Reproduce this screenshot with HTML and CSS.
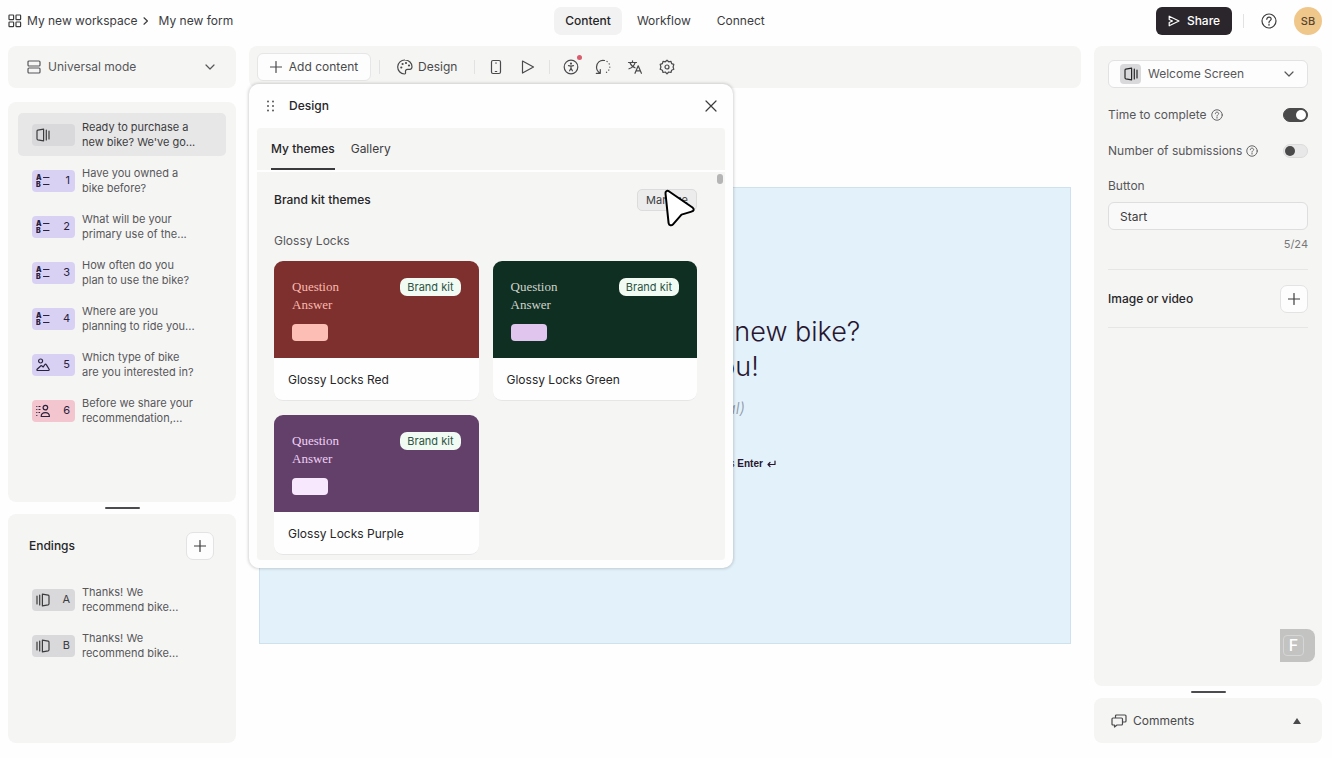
FILE: index.html
```html
<!DOCTYPE html>
<html lang="en">
<head>
    <meta charset="UTF-8">
    <meta name="viewport" content="width=device-width, initial-scale=1.0">
    <title>My new form</title>
    <link rel="stylesheet" href="styles.css">
</head>
<body>
    <!-- shared icons -->
    <svg class="sprite" width="0" height="0" aria-hidden="true">
        <symbol id="chevron" viewBox="0 0 10 10"><path d="M1 3l4 4 4-4"/></symbol>
        <symbol id="plus" viewBox="0 0 12 12"><path d="M6 .5v11M.5 6h11"/></symbol>
        <symbol id="help" viewBox="0 0 16 16"><circle cx="8" cy="8" r="7"/><path d="M5.8 6.3c0-1.4 1-2.1 2.2-2.1s2.2.8 2.2 1.9c0 1.5-2.2 1.6-2.2 3.3M8 11v1.2"/></symbol>
        <symbol id="welcome" viewBox="0 0 14 14"><path d="M1 3.2Q1 2.4 1.8 2.2L7.6 1.2v11.6L1.8 11.8Q1 11.6 1 10.8zM10.3 2v10M13 3v8"/></symbol>
        <symbol id="ending" viewBox="0 0 14 14"><path d="M1 3v8M3.7 2v10M6.4 1.2l5.8 1q.8.2.8 1v7.6q0 .8-.8 1l-5.8 1z"/></symbol>
        <symbol id="choice" viewBox="0 0 14 14"><text x="0" y="6">A</text><text x="0" y="13">B</text><path d="M7.500 3.500h5.500M7.500 10.500h5.500"/></symbol>
        <symbol id="picture" viewBox="0 0 14 14"><circle cx="4.6" cy="3" r="2"/><path d="M1.8 12.5h10.6c.8 0 1-.7.7-1.3L10.3 6.6c-.4-.7-1.1-.7-1.5 0L7.2 9 6 8c-.6-.4-1.2-.3-1.6.2L1.1 11.3c-.5.6-.1 1.2.7 1.2z"/></symbol>
        <symbol id="contact" viewBox="0 0 14 14"><circle cx="9.4" cy="3.6" r="2.3"/><path d="M5.2 12.5c0-2.400 1.800-3.900 4.200-3.900s4 1.500 4 3.900zM.7 2.500h.2M.7 5.500h.2M.7 8.500h.2M.7 11.500h.2M3 2.500h1M3 5.500h1M3 8.500h.6"/></symbol>
    </svg>

    <header class="topbar">
        <nav class="breadcrumb">
            <svg class="icon" width="14" height="14" viewBox="0 0 14 14"><rect x="1" y="1" width="4.6" height="4.6" rx=".6"/><rect x="8" y="1" width="4.6" height="4.6" rx=".6"/><rect x="1" y="8" width="4.6" height="4.6" rx=".6"/><rect x="8" y="8" width="4.6" height="4.6" rx=".6"/></svg>
            <a href="#">My new workspace</a>
            <svg class="icon crumb-arrow" width="6" height="8" viewBox="0 0 6 8"><path d="M1 .8L4.4 4 1 7.2"/></svg>
            <a href="#">My new form</a>
        </nav>
        <nav class="tabs">
            <a href="#" class="active">Content</a>
            <a href="#">Workflow</a>
            <a href="#">Connect</a>
        </nav>
        <div class="account">
            <button class="share">
                <svg class="icon" width="12" height="12" viewBox="0 0 12 12"><path d="M1.2 1.2L11 6 1.2 10.8V7.5L4.5 6 1.2 4.5z"/></svg>
                Share
            </button>
            <span class="divider"></span>
            <button class="plain" aria-label="Help"><svg class="icon" width="16" height="16"><use href="#help"/></svg></button>
            <button class="avatar">SB</button>
        </div>
    </header>

    <div class="layout">
        <aside class="column">
            <label class="panel mode">
                <svg class="icon" width="14" height="14" viewBox="0 0 14 14"><rect x="1" y="1" width="12" height="5" rx="1"/><rect x="1" y="8" width="12" height="5" rx="1"/></svg>
                <select aria-label="Mode"><option>Universal mode</option></select>
                <svg class="icon" width="10" height="10"><use href="#chevron"/></svg>
            </label>

            <section class="panel questions">
                <a href="#" class="item selected">
                    <span class="tag gray"><svg class="icon" width="14" height="14"><use href="#welcome"/></svg></span>
                    <span>Ready to purchase a<br>new bike? We've go...</span>
                </a>
                <a href="#" class="item">
                    <span class="tag"><svg class="icon" width="14" height="14"><use href="#choice"/></svg>1</span>
                    <span>Have you owned a<br>bike before?</span>
                </a>
                <a href="#" class="item">
                    <span class="tag"><svg class="icon" width="14" height="14"><use href="#choice"/></svg>2</span>
                    <span>What will be your<br>primary use of the...</span>
                </a>
                <a href="#" class="item">
                    <span class="tag"><svg class="icon" width="14" height="14"><use href="#choice"/></svg>3</span>
                    <span>How often do you<br>plan to use the bike?</span>
                </a>
                <a href="#" class="item">
                    <span class="tag"><svg class="icon" width="14" height="14"><use href="#choice"/></svg>4</span>
                    <span>Where are you<br>planning to ride you...</span>
                </a>
                <a href="#" class="item">
                    <span class="tag"><svg class="icon" width="14" height="14"><use href="#picture"/></svg>5</span>
                    <span>Which type of bike<br>are you interested in?</span>
                </a>
                <a href="#" class="item">
                    <span class="tag pink"><svg class="icon" width="14" height="14"><use href="#contact"/></svg>6</span>
                    <span>Before we share your<br>recommendation,...</span>
                </a>
            </section>

            <div class="handle"></div>

            <section class="panel endings">
                <div class="row endings-head">
                    <h2>Endings</h2>
                    <button class="add" aria-label="Add ending"><svg class="icon" width="12" height="12"><use href="#plus"/></svg></button>
                </div>
                <a href="#" class="item">
                    <span class="tag gray"><svg class="icon" width="14" height="14"><use href="#ending"/></svg>A</span>
                    <span>Thanks! We<br>recommend bike...</span>
                </a>
                <a href="#" class="item">
                    <span class="tag gray"><svg class="icon" width="14" height="14"><use href="#ending"/></svg>B</span>
                    <span>Thanks! We<br>recommend bike...</span>
                </a>
            </section>
        </aside>

        <main class="editor">
            <div class="panel toolbar">
                <button class="add-content"><svg class="icon" width="12" height="12"><use href="#plus"/></svg>Add content</button>
                <span class="divider"></span>
                <button class="plain design">
                    <svg class="icon" width="16" height="16" viewBox="0 0 16 16"><path d="M8 1a7 7 0 0 0-.6 14c1.3 0 1.2-1 1.1-1.9C8.3 11.4 9 10.3 10.5 10.3h2.3c1.4 0 2.2-1 2.2-2.500C15 4 12 1 8 1z"/><circle cx="4.3" cy="8.5" r=".5"/><circle cx="5.6" cy="5" r=".5"/><circle cx="9" cy="4" r=".5"/><circle cx="12" cy="6.5" r=".5"/></svg>
                    Design
                </button>
                <span class="divider"></span>
                <div class="tools">
                    <button class="plain" aria-label="Device"><svg class="icon" width="16" height="16" viewBox="0 0 16 16"><rect x="3.5" y="1.5" width="9" height="13" rx="1.5"/><path d="M7.6 4h.8M7.3 12.5h1.4"/></svg></button>
                    <button class="plain" aria-label="Preview"><svg class="icon" width="16" height="16" viewBox="0 0 16 16"><path d="M2.500 2l11 6-11 6z"/></svg></button>
                </div>
                <span class="divider"></span>
                <div class="tools">
                    <button class="plain notify" aria-label="Accessibility"><svg class="icon" width="16" height="16" viewBox="0 0 16 16"><circle cx="8" cy="8" r="6.8"/><circle cx="8" cy="4.6" r=".5"/><path d="M5.500 6.600l2.500.5 2.500-.5M8 7v2.200M8 9.200l-1.400 2.600M8 9.200l1.400 2.600"/></svg></button>
                    <button class="plain" aria-label="Logic"><svg class="icon" width="16" height="16" viewBox="0 0 16 16"><path d="M9.500 1.500C5 .5 1.500 4 1.500 8c0 2.800 1.400 4.800 3.500 6M5.300 10.500v3.800H1.300"/><path stroke-dasharray=".2 3" d="M12 2.500c4.500 3 3.800 9.800-3 12"/></svg></button>
                    <button class="plain" aria-label="Translate"><svg class="icon" width="16" height="16" viewBox="0 0 16 16"><path d="M1.500 3.500h8M5.500 1.800v1.700M3 3.800c.8 2.300 2.800 4.200 5 5M8 3.800C7.200 6.500 5 8.700 2 9.800M8 14.300l3.200-7.500 3.200 7.500M9.200 11.800h4"/></svg></button>
                    <button class="plain" aria-label="Settings"><svg class="icon" width="16" height="16" viewBox="0 0 16 16"><circle cx="8" cy="8" r="2"/><path d="M8 1.200l1.700 1.600 2.300-.5.600 2.300 2.200.8L14.100 8l.7 2.300-2.200.9-.6 2.300-2.300-.5L8 14.800 6.300 13l-2.300.5-.6-2.300-2.200-.9L1.900 8l-.7-2.600 2.200-.8L4 2.300l2.300.5z"/></svg></button>
                </div>
            </div>

            <div class="canvas">
                <h1>Ready to purchase a new bike?<br>We've got you!</h1>
                <p class="description">Description (optional)</p>
                <div class="start">
                    <button>Start</button>
                    <span>press <b>Enter</b></span>
                    <svg class="icon" width="9" height="8" viewBox="0 0 9 8"><path d="M8 1v3.500H1M3 2.500l-2 2 2 2"/></svg>
                </div>
            </div>

            <!-- floating design window -->
            <div class="dialog">
                <div class="dialog-head">
                    <svg class="grip" width="8" height="12" viewBox="0 0 8 12"><circle cx="1" cy="1.500" r="1"/><circle cx="6" cy="1.500" r="1"/><circle cx="1" cy="6" r="1"/><circle cx="6" cy="6" r="1"/><circle cx="1" cy="10.500" r="1"/><circle cx="6" cy="10.500" r="1"/></svg>
                    <h2>Design</h2>
                    <button class="plain" aria-label="Close"><svg class="icon" width="12" height="12" viewBox="0 0 12 12"><path d="M1 1l10 10M11 1L1 11"/></svg></button>
                </div>
                <div class="dialog-body">
                    <nav class="dialog-tabs">
                        <a href="#" class="active">My themes</a>
                        <a href="#">Gallery</a>
                    </nav>
                    <div class="scroll">
                        <div class="row">
                            <h2>Brand kit themes</h2>
                            <div class="manage">
                                <button>Manage</button>
                                <svg class="cursor" width="34" height="40" viewBox="0 0 34 40"><path d="M2.500 4.500C2.200 2.500 4 1.200 5.800 2.200L29.500 18.500c2 1.600 1.400 3.600-1 4.100l-10 3-8.500 9.700c-1.600 1.800-4 1.200-4.400-1.200z"/></svg>
                            </div>
                        </div>
                        <h3>Glossy Locks</h3>
                        <div class="themes">
                            <button class="theme red">
                                <span class="preview">
                                    <span class="sample">Question<br>Answer<i></i></span>
                                    <span class="badge">Brand kit</span>
                                </span>
                                <span class="name">Glossy Locks Red</span>
                            </button>
                            <button class="theme green">
                                <span class="preview">
                                    <span class="sample">Question<br>Answer<i></i></span>
                                    <span class="badge">Brand kit</span>
                                </span>
                                <span class="name">Glossy Locks Green</span>
                            </button>
                            <button class="theme purple">
                                <span class="preview">
                                    <span class="sample">Question<br>Answer<i></i></span>
                                    <span class="badge">Brand kit</span>
                                </span>
                                <span class="name">Glossy Locks Purple</span>
                            </button>
                        </div>
                        <span class="thumb"></span>
                    </div>
                </div>
            </div>
        </main>

        <aside class="column">
            <section class="panel settings">
                <label class="block-type">
                    <span class="type-icon"><svg class="icon" width="14" height="14"><use href="#welcome"/></svg></span>
                    <select aria-label="Block type"><option>Welcome Screen</option></select>
                    <svg class="icon" width="10" height="10"><use href="#chevron"/></svg>
                </label>
                <div class="row option">
                    <label for="timeToggle">Time to complete <svg class="icon" width="12" height="12"><use href="#help"/></svg></label>
                    <input type="checkbox" id="timeToggle" class="toggle" checked>
                </div>
                <div class="row option">
                    <label for="countToggle">Number of submissions <svg class="icon" width="12" height="12"><use href="#help"/></svg></label>
                    <input type="checkbox" id="countToggle" class="toggle">
                </div>
                <label for="buttonText" class="field-label">Button</label>
                <input type="text" id="buttonText" class="input-field" value="Start">
                <span class="counter">5/24</span>
                <div class="row media">
                    <h2>Image or video</h2>
                    <button class="add" aria-label="Add image or video"><svg class="icon" width="12" height="12"><use href="#plus"/></svg></button>
                </div>
                <span class="key-badge"><kbd>F</kbd></span>
            </section>

            <div class="handle"></div>

            <button class="panel comments">
                <svg class="icon" width="16" height="14" viewBox="0 0 16 14"><path d="M4.500 4V2q0-1 1-1H14q1 0 1 1v5q0 1-1 1h-2.500M2 4h8.500q1 0 1 1v5q0 1-1 1H6l-2.500 2V11H2q-1 0-1-1V5q0-1 1-1z"/></svg>
                Comments
                <svg class="caret" width="8" height="6" viewBox="0 0 8 6"><path d="M4 0l4 6H0z"/></svg>
            </button>
        </aside>
    </div>
</body>
</html>
```
FILE: styles.css
```css
* {
    box-sizing: border-box;
}
body {
    font-family: Inter, "Liberation Sans", sans-serif;
    font-size: 12px;
    line-height: 16px;
    color: #3c3c3e;
    background: #fefefe;
    margin: 0;
    min-height: 100vh;
    display: flex;
    flex-direction: column;
}
a {
    color: inherit;
    text-decoration: none;
}
h1, h2, h3, p {
    margin: 0;
}
h2 {
    font-size: 12px;
    font-weight: 500;
    color: #262628;
}
button, input, select {
    font: inherit;
    color: inherit;
}
button {
    display: flex;
    align-items: center;
    justify-content: center;
    padding: 0;
    border: none;
    cursor: pointer;
}
select {
    appearance: none;
    flex: 1;
    min-width: 0;
    padding: 0;
    border: none;
    background: none;
    outline: none;
}
.sprite {
    display: none;
}
.icon {
    flex: none;
    fill: none;
    stroke: currentColor;
    stroke-width: 1.2;
    stroke-linecap: round;
    stroke-linejoin: round;
}
symbol text {
    font-size: 7px;
    font-weight: 900;
    fill: currentColor;
    stroke: none;
}
.plain {
    background: none;
}
.divider {
    width: 1px;
    height: 14px;
    background: #e2e2e3;
}
.row {
    display: flex;
    align-items: center;
    justify-content: space-between;
}
.panel {
    background: #f5f5f4;
    border-radius: 8px;
}
.handle {
    width: 35px;
    height: 2px;
    margin: 5px auto;
    border-radius: 1px;
    background: #4c4b50;
}
.add {
    width: 28px;
    height: 28px;
    border: 1px solid #e3e3e3;
    border-radius: 7px;
    background: #fdfdfd;
}

/* top bar */
.topbar {
    display: grid;
    grid-template-columns: 1fr auto 1fr;
    align-items: center;
    height: 42px;
    padding: 0 10px 0 8px;
}
.breadcrumb {
    display: flex;
    align-items: center;
    gap: 5px;
}
.crumb-arrow {
    margin-right: 5px;
}
.tabs {
    display: flex;
    gap: 4px;
}
.tabs a {
    padding: 6px 11px;
    border-radius: 7px;
}
.tabs .active {
    background: #f2f2f2;
    color: #262628;
    font-weight: 500;
}
.account {
    display: flex;
    align-items: center;
    justify-content: flex-end;
    gap: 17px;
}
.account .divider {
    margin: 0 0 0 -6px;
}
.share {
    gap: 7px;
    width: 76px;
    height: 28px;
    border-radius: 6px;
    background: #2a262c;
    color: #fff;
    font-weight: 500;
}
.avatar {
    width: 28px;
    height: 28px;
    border-radius: 50%;
    background: #f0c78b;
    font-size: 11px;
    font-weight: 500;
    color: #57462f;
}

/* page columns */
.layout {
    flex: 1;
    display: grid;
    grid-template-columns: 228px 1fr 228px;
    gap: 13px;
    padding: 4px 10px 15px 8px;
}
.column {
    display: flex;
    flex-direction: column;
}

/* left column */
.mode {
    display: flex;
    align-items: center;
    gap: 7px;
    height: 42px;
    padding: 0 21px 0 19px;
    margin-bottom: 14px;
    color: #57575a;
}
.questions {
    flex: 1;
    padding: 11px 10px;
}
.item {
    display: flex;
    align-items: center;
    gap: 7px;
    height: 43px;
    padding-left: 14px;
    margin-bottom: 3px;
    border-radius: 5px;
    font-size: 11px;
    line-height: 15px;
    color: #57575a;
}
.selected {
    background: #e7e7e8;
    color: #3c3c3e;
}
.tag {
    display: flex;
    align-items: center;
    justify-content: space-between;
    width: 43px;
    height: 22px;
    padding: 0 5px 0 4px;
    border-radius: 4px;
    background: #d8d1f4;
    color: #29223c;
}
.gray {
    background: #d9d8da;
    color: #3c3c3e;
}
.pink {
    background: #f3c5cf;
}
.endings {
    height: 229px;
    padding: 18px 10px;
}
.endings-head {
    padding: 0 12px 0 11px;
    margin-bottom: 18px;
}

/* center */
.editor {
    position: relative;
    display: flex;
    flex-direction: column;
}
.toolbar {
    display: flex;
    align-items: center;
    height: 42px;
    padding-left: 8px;
    color: #4a4a4c;
}
.add-content {
    gap: 7px;
    width: 114px;
    height: 28px;
    border: 1px solid #e6e6e6;
    border-radius: 6px;
    background: #fdfdfd;
}
.toolbar .divider {
    margin: 0 8px;
}
.design {
    gap: 5px;
    padding: 0 9px;
}
.tools {
    display: flex;
    gap: 16px;
    padding: 0 5px;
}
.notify {
    position: relative;
}
.notify::after {
    content: "";
    position: absolute;
    top: -4px;
    right: -3px;
    width: 5px;
    height: 5px;
    border-radius: 50%;
    background: #d95c6e;
}
.canvas {
    display: flex;
    flex-direction: column;
    align-items: center;
    justify-content: center;
    min-height: 457px;
    margin: 99px 10px 0;
    padding-bottom: 36px;
    border: 1px solid #cfe1ec;
    background: #e3f1fa;
    color: #281630;
}
.canvas h1 {
    font-size: 27px;
    font-weight: 300;
    line-height: 35px;
    text-align: center;
}
.description {
    margin: 14px 0 28px;
    font-size: 16px;
    font-style: italic;
    font-weight: 300;
    line-height: 20px;
    color: #8f99a6;
}
.start {
    display: flex;
    align-items: center;
    gap: 4px;
    font-family: "Liberation Sans", Arial, sans-serif;
    font-size: 10px;
}
.start button {
    width: 144px;
    height: 36px;
    margin-right: 8px;
    border-radius: 4px;
    background: #281630;
    color: #fff;
    font-size: 16px;
}

/* design window */
.dialog {
    position: absolute;
    top: 38px;
    left: 0;
    width: 484px;
    padding: 0 8px 8px;
    border-radius: 10px;
    background: #fefefe;
    box-shadow: 0 0 3px 1px rgba(0, 0, 0, 0.16);
}
.dialog-head {
    display: flex;
    align-items: center;
    gap: 14px;
    height: 44px;
    padding: 0 8px 0 10px;
}
.dialog-head .plain {
    margin-left: auto;
}
.grip {
    fill: #57575a;
}
.dialog-body {
    border-radius: 4px;
    background: #f5f5f4;
}
.dialog-tabs {
    display: flex;
    gap: 16px;
    padding: 0 14px;
    border-bottom: 2px solid #fefefe;
}
.dialog-tabs a {
    padding: 13px 0;
}
.dialog-tabs .active {
    border-bottom: 2px solid #3a393c;
    padding-bottom: 11px;
    color: #262628;
    font-weight: 500;
}
.scroll {
    position: relative;
    height: 388px;
    padding: 17px 28px 0 17px;
    overflow: hidden;
}
.thumb {
    position: absolute;
    top: 2px;
    right: 2px;
    width: 6px;
    height: 10px;
    border-radius: 3px;
    background: #b5b5b5;
}
.manage {
    position: relative;
}
.manage button {
    width: 60px;
    height: 22px;
    border: 1px solid #dcdcdc;
    border-radius: 5px;
    background: #ececec;
    font-size: 11px;
}
.cursor {
    position: absolute;
    top: 0;
    left: 26px;
    fill: #fff;
    stroke: #000;
    stroke-width: 2;
    stroke-linejoin: round;
}
h3 {
    margin: 22px 0 12px;
    font-size: 12px;
    font-weight: 400;
    color: #57575a;
}
.themes {
    display: grid;
    grid-template-columns: 1fr 1fr;
    gap: 14px;
}
.theme {
    display: block;
    border: 1px solid #e6e6e6;
    border-width: 0 0 1px;
    border-radius: 9px;
    background: #fefefe;
    text-align: left;
    color: #262628;
    overflow: hidden;
}
.preview {
    display: flex;
    align-items: flex-start;
    justify-content: space-between;
    height: 97px;
    padding: 17px 18px 0;
}
.sample {
    font-family: "Liberation Serif", serif;
    font-size: 13px;
    line-height: 18px;
}
.sample i {
    display: block;
    width: 36px;
    height: 17px;
    margin-top: 10px;
    border-radius: 4px;
}
.badge {
    padding: 1px 7px;
    border-radius: 7px;
    background: #f2fbf3;
    font-size: 11px;
    color: #2b5444;
}
.name {
    display: block;
    padding: 14px 14px 12px;
}
.red .preview {
    background: #7d302d;
    color: #fbb9ae;
}
.red i {
    background: #fdbfb5;
}
.green .preview {
    background: #0f2f22;
    color: #cfd3cc;
}
.green i {
    background: #e0c5ee;
}
.purple .preview {
    background: #624069;
    color: #f0d0f6;
}
.purple i {
    background: #f8e8fd;
}

/* right column */
.settings {
    position: relative;
    flex: 1;
    padding: 14px;
}
.block-type {
    display: flex;
    align-items: center;
    gap: 7px;
    height: 28px;
    padding: 0 13px 0 11px;
    margin-bottom: 9px;
    border: 1px solid #e2e2e2;
    border-radius: 6px;
    background: #fdfdfd;
    color: #57575a;
}
.type-icon {
    display: flex;
    align-items: center;
    justify-content: center;
    width: 21px;
    height: 20px;
    border-radius: 4px;
    background: #d9d8da;
    color: #262628;
}
.option {
    height: 36px;
    color: #57575a;
}
.option label {
    display: flex;
    align-items: center;
    gap: 4px;
}
.toggle {
    appearance: none;
    display: flex;
    align-items: center;
    width: 25px;
    height: 14px;
    margin: 0;
    padding: 0 1px;
    border: 1px solid #dcdcdc;
    border-radius: 7px;
    background: #e8e8e8;
}
.toggle::before {
    content: "";
    width: 10px;
    height: 10px;
    border-radius: 50%;
    background: #4a4a4a;
}
.toggle:checked {
    justify-content: flex-end;
    border-color: #4a4a4a;
    background: #4a4a4a;
}
.toggle:checked::before {
    background: #fff;
}
.field-label {
    display: block;
    margin: 9px 0 8px;
    color: #57575a;
}
.input-field {
    display: block;
    width: 100%;
    height: 28px;
    padding: 0 11px;
    border: 1px solid #dedede;
    border-radius: 6px;
    background: #f9f9f9;
}
.counter {
    display: block;
    margin: 6px 0 17px;
    font-size: 11px;
    text-align: right;
    color: #77777a;
}
.media {
    height: 59px;
    border: 1px solid #e6e6e6;
    border-width: 1px 0;
}
.key-badge {
    position: absolute;
    right: 7px;
    bottom: 24px;
    display: flex;
    align-items: center;
    width: 35px;
    height: 33px;
    padding-left: 3px;
    border-radius: 0 8px 8px 0;
    background: #c3c3c2;
}
.key-badge kbd {
    width: 21px;
    height: 21px;
    border: 1px solid #d6d6d6;
    border-radius: 4px;
    font-family: Inter, sans-serif;
    font-size: 16px;
    font-weight: 500;
    line-height: 19px;
    text-align: center;
    color: #fff;
}
.comments {
    justify-content: flex-start;
    gap: 6px;
    height: 45px;
    padding: 0 21px 0 17px;
    color: #4a4a4c;
}
.caret {
    margin-left: auto;
    fill: #4a4a4c;
}
```
